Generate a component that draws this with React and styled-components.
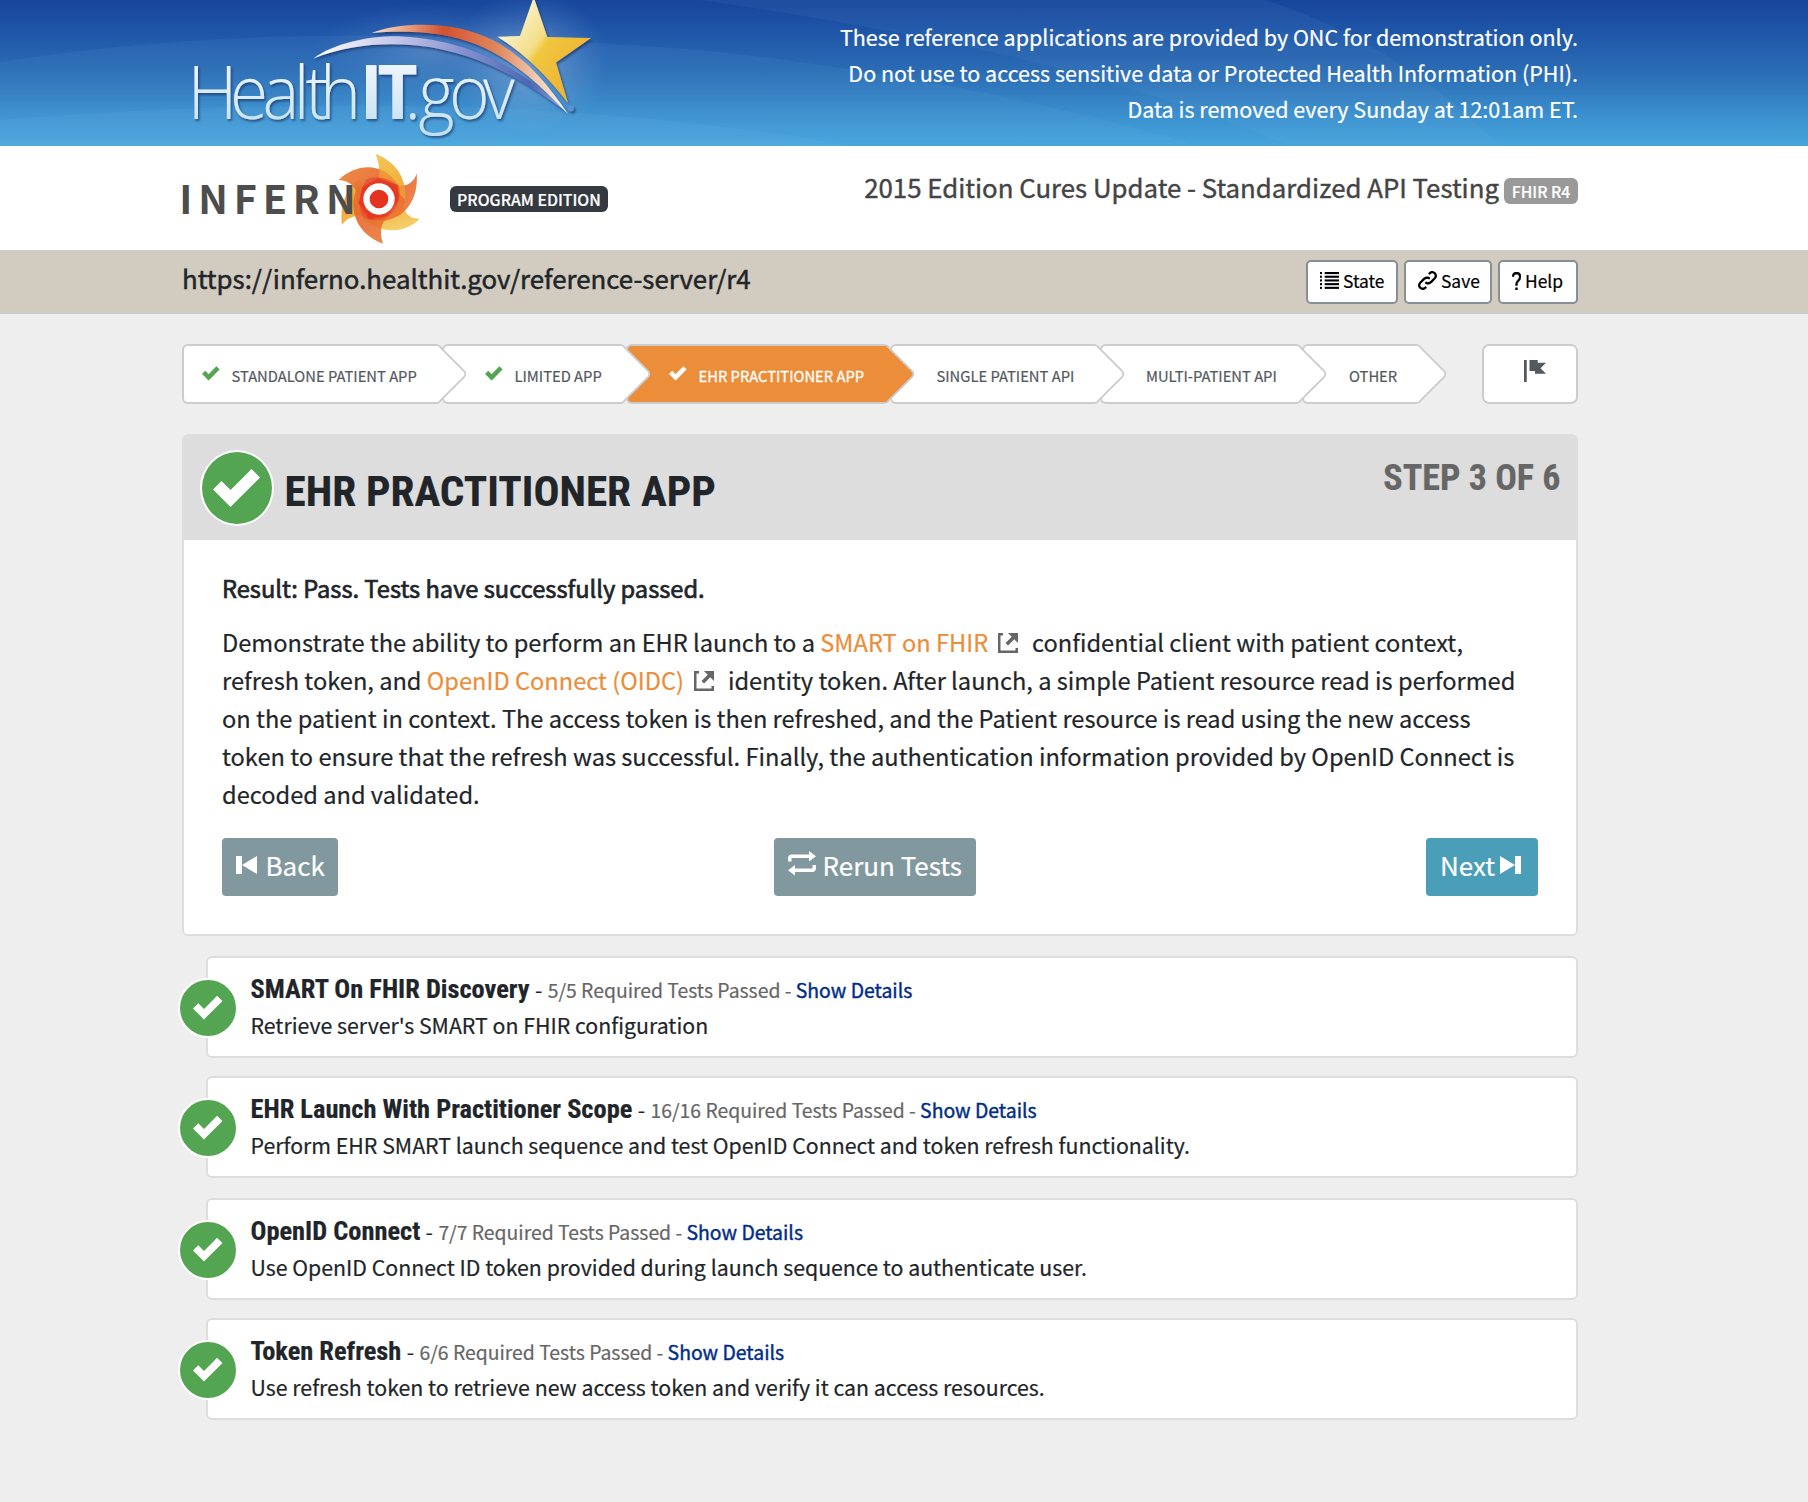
import React from "react";
import styled, { createGlobalStyle, css } from "styled-components";

const sans = `"Noto Sans CJK JP", "Noto Sans", sans-serif`;
const condensed = `"Roboto Condensed", Roboto, sans-serif`;

const GlobalStyle = createGlobalStyle`
  *, *::before, *::after { box-sizing: border-box; }
  body {
    margin: 0;
    min-height: 100vh;
    background: #eee;
    color: #212529;
    font-family: ${sans};
    -webkit-text-stroke: 0.2px;
  }
`;

/* ---------- icons ---------- */

const IconSvg = styled.svg`
  display: block;
  flex: none;
  fill: currentColor;
  width: ${(p) => p.$w}px;
  height: ${(p) => p.$h || p.$w}px;
`;

const paths = {
  check: "M6.41 1l-.69.72-2.78 2.78-.81-.78-.72-.72-1.41 1.41.72.72 1.5 1.5.69.72.72-.72 3.5-3.5.72-.72-1.44-1.41z",
  link: "M5.88.03c-.18.01-.36.03-.53.09-.27.1-.53.25-.75.47a.5.5 0 1 0 .69.69c.11-.11.24-.17.38-.22.35-.12.78-.07 1.06.22.39.39.39 1.04 0 1.44l-1.5 1.5c-.44.44-.8.48-1.06.47-.26-.01-.41-.13-.41-.13a.5.5 0 1 0-.5.88s.34.22.84.25c.5.03 1.2-.16 1.81-.78l1.5-1.5c.78-.78.78-2.04 0-2.81-.28-.28-.61-.45-.97-.53-.18-.04-.38-.04-.56-.03zm-2 2.31c-.5-.02-1.19.15-1.78.75l-1.5 1.5c-.78.78-.78 2.04 0 2.81.56.56 1.36.72 2.06.47.27-.1.53-.25.75-.47a.5.5 0 1 0-.69-.69c-.11.11-.24.17-.38.22-.35.12-.78.07-1.06-.22-.39-.39-.39-1.04 0-1.44l1.5-1.5c.4-.4.75-.45 1.03-.44.28.01.47.09.47.09a.5.5 0 1 0 .44-.88s-.34-.2-.84-.22z",
  flag: "M0 0v8h1v-8h-1zm2 0v4h2v1h4l-2-1.97 2-2.03h-3v-1h-3z",
  external: "M0 0v8h8v-2h-1v1h-6v-6h1v-1h-2zm4 0l1.5 1.5-2.5 2.5 1 1 2.5-2.5 1.5 1.5v-4h-4z",
  back: "M0 1v6h2v-6h-2zm2 3l5 3v-6l-5 3z",
  forward: "M0 1v6l5-3-5-3zm5 3v3h2v-6h-2v3z",
  loop: "M6 0v1h-5c-.55 0-1 .45-1 1v1h1v-1h5v1l2-1.5-2-1.5zm-4 4l-2 1.5 2 1.5v-1h5c.55 0 1-.45 1-1v-1h-1v1h-5v-1z",
};

function Icon({ name, size, className }) {
  return (
    <IconSvg className={className} $w={size} viewBox="0 0 8 8" aria-hidden="true">
      <path d={paths[name]} />
    </IconSvg>
  );
}

function ListIcon() {
  return (
    <IconSvg $w={19} $h={17} viewBox="0 0 19 17" aria-hidden="true">
      {[0, 3.7, 7.4, 11.1, 14.8].map((y) => (
        <React.Fragment key={y}>
          <rect x="0" y={y} width="2" height="2.1" />
          <rect x="4.7" y={y} width="14.3" height="2.1" />
        </React.Fragment>
      ))}
    </IconSvg>
  );
}

function QuestionIcon() {
  return (
    <IconSvg $w={9} $h={18} viewBox="0 0 4.97 8" preserveAspectRatio="none" aria-hidden="true">
      <path d="M2.47 0c-.85 0-1.48.26-1.88.66-.4.4-.54.9-.59 1.28l1 .13c.04-.25.12-.5.31-.69.19-.19.49-.38 1.16-.38.66 0 1.02.16 1.22.34.2.18.28.4.28.66 0 .83-.34 1.06-.84 1.5-.5.44-1.16 1.08-1.16 2.25v.25h1v-.25c0-.83.31-1.06.81-1.5.5-.44 1.19-1.08 1.19-2.25 0-.48-.17-1.02-.59-1.41-.43-.39-1.07-.59-1.91-.59zm-.5 7v1h1v-1h-1z" stroke="currentColor" strokeWidth=".25" />
    </IconSvg>
  );
}

/* ---------- banner ---------- */

const Band = styled.div`
  display: flex;
  justify-content: space-between;
  align-items: flex-start;
  padding: 0 230px 0 182px;
`;

const Banner = styled(Band)`
  position: relative;
  height: 146px;
  background: linear-gradient(#16459c 0%, #1f56a8 22%, #2c6fb6 52%, #3b91cf 80%, #46a4dc 100%);
`;

const BannerWaves = styled.svg`
  position: absolute;
  inset: 0;
  width: 100%;
  height: 100%;
`;

const BannerLogo = styled.svg`
  position: relative;
  width: 440px;
  height: 146px;
`;

const Wordmark = styled.text`
  font: 300 74.6px "Open Sans", "Noto Sans", sans-serif;
  -webkit-text-stroke: 0;
`;

const WordmarkBold = styled.tspan`
  font-weight: 700;
`;

const Disclaimer = styled.p`
  position: relative;
  margin: 0;
  padding-top: 19px;
  color: #fff;
  font-size: 21.5px;
  line-height: 36px;
  text-align: right;
  white-space: nowrap;
`;

function HealthItLogo() {
  return (
    <BannerLogo viewBox="182 0 440 146" aria-label="HealthIT.gov">
      <defs>
        <linearGradient id="letters" x1="0" y1="64" x2="0" y2="134" gradientUnits="userSpaceOnUse">
          <stop offset="0" stopColor="#eef5fc" />
          <stop offset="1" stopColor="#c2e0f2" />
        </linearGradient>
        <linearGradient id="star" x1="500" y1="25" x2="570" y2="75" gradientUnits="userSpaceOnUse">
          <stop offset="0" stopColor="#fbf7dc" />
          <stop offset=".47" stopColor="#f4dd86" />
          <stop offset=".56" stopColor="#f0c63f" />
          <stop offset="1" stopColor="#eeb634" />
        </linearGradient>
        <linearGradient id="red" x1="371" y1="0" x2="568" y2="0" gradientUnits="userSpaceOnUse">
          <stop offset="0" stopColor="#f6e4d8" />
          <stop offset=".2" stopColor="#e59a78" />
          <stop offset=".37" stopColor="#d4512f" />
          <stop offset=".65" stopColor="#e08a5e" />
          <stop offset=".85" stopColor="#f2cdb6" />
          <stop offset="1" stopColor="#fdf5ee" />
        </linearGradient>
        <linearGradient id="violet" x1="313" y1="0" x2="568" y2="0" gradientUnits="userSpaceOnUse">
          <stop offset="0" stopColor="#fff" />
          <stop offset=".35" stopColor="#bfc2e6" />
          <stop offset=".6" stopColor="#8390cf" />
          <stop offset=".85" stopColor="#4a66b8" />
          <stop offset="1" stopColor="#8fb0de" />
        </linearGradient>
        <radialGradient id="glow">
          <stop offset="0" stopColor="#dbe8f8" stopOpacity=".4" />
          <stop offset="1" stopColor="#8fb8e8" stopOpacity="0" />
        </radialGradient>
        <filter id="drop" x="-10%" y="-10%" width="120%" height="130%">
          <feDropShadow dx="1.4" dy="2" stdDeviation="1.2" floodColor="#0b2c5c" floodOpacity=".65" />
        </filter>
      </defs>
      <ellipse cx="530" cy="62" rx="78" ry="72" fill="url(#glow)" />
      <ellipse cx="430" cy="50" rx="120" ry="46" fill="url(#glow)" opacity=".5" />
      <g filter="url(#drop)">
        <Wordmark transform="scale(.93 1)" y="119.3" fill="url(#letters)">
          <tspan x="201.600 247.400 282.300 315.800 328.600 344">Health</tspan>
          <WordmarkBold x="386.700 405.900">IT</WordmarkBold>
          <tspan x="435 449.900 482.900 519.400">.gov</tspan>
        </Wordmark>
      </g>
      <g filter="url(#drop)">
        <path d="M313.5 58.5C335 42 375 35 402 36.500C470 40 525 70 567 112C525 82 480 52 417 45.500C380 42 345 46 313.500 58.500Z" fill="url(#violet)" />
        <path d="M371.500 33C395 24 425 23 452 27C507 36 540 72 568 114C540 86 505 48 450 36.500C425 31 395 31 371.500 33Z" fill="url(#red)" />
        <path d="M533.700 -3L547.300 37L591 38L556 62.500L568 103C549 79 527 55 497.300 36.700L520 36Z" fill="url(#star)" />
        <circle cx="571" cy="108.500" r="3" fill="#5f8fd0" />
      </g>
    </BannerLogo>
  );
}

/* ---------- brand row ---------- */

const BrandRow = styled(Band)`
  height: 104px;
  background: #fff;
`;

const Brand = styled.div`
  display: flex;
  align-items: flex-start;
  gap: 18px;
`;

const InfernoLogo = styled.svg`
  width: 258px;
  height: 100px;
  margin: 4px 0 0 -8px;
`;

const Badge = styled.span`
  display: block;
  width: ${(p) => p.$w}px;
  height: 26px;
  margin-top: ${(p) => p.$top}px;
  border-radius: 6px;
  background: ${(p) => p.$bg};
  color: #fff;
  font-size: ${(p) => p.$size}px;
  font-weight: 500;
  line-height: 27px;
  text-align: center;
  white-space: nowrap;
`;

const Module = styled.div`
  display: flex;
  align-items: flex-start;
  gap: 5px;
  padding-top: 21px;
`;

const ModuleName = styled.span`
  color: #444;
  font-size: 25.8px;
  line-height: 40px;
  white-space: nowrap;
  -webkit-text-stroke: 0.4px;
`;

function Inferno() {
  return (
    <InfernoLogo viewBox="174 150 258 100" aria-label="Inferno">
      <defs>
        <linearGradient id="orangeBlade" x1="488" y1="50" x2="700" y2="260" gradientUnits="userSpaceOnUse">
          <stop offset="0" stopColor="#ec8237" />
          <stop offset=".5" stopColor="#e8632b" />
          <stop offset="1" stopColor="#ec7c35" />
        </linearGradient>
        <linearGradient id="yellowBlade" x1="600" y1="12" x2="660" y2="240" gradientUnits="userSpaceOnUse">
          <stop offset="0" stopColor="#f5d878" />
          <stop offset=".5" stopColor="#efa030" />
          <stop offset="1" stopColor="#f5d06a" />
        </linearGradient>
      </defs>
      <g transform="translate(176 150) scale(.33333)">
        <path d="M599 12C655 34 692 78 688 150L600 120C614 80 614 50 599 12Z" fill="url(#yellowBlade)" />
        <path d="M731 206C690 250 615 255 560 205L610 150L690 140C676 180 692 206 731 206Z" fill="url(#yellowBlade)" />
        <path d="M498 225C492 180 504 120 548 88L600 150L560 196C532 196 512 206 498 225Z" fill="url(#yellowBlade)" />
        <path d="M488 90C540 40 625 32 672 112L640 180L545 160C548 122 530 92 488 90Z" fill="url(#orangeBlade)" opacity=".92" />
        <path d="M722 70C728 140 695 208 612 214L600 130L640 100C680 116 712 106 722 70Z" fill="url(#orangeBlade)" opacity=".88" />
        <path d="M621 281C555 258 508 190 545 108L600 120L650 190C620 206 606 236 621 281Z" fill="url(#orangeBlade)" opacity=".88" />
        <path d="M599 12C655 34 692 78 688 150L640 100L606 92C614 70 610 40 599 12Z" fill="#f3b840" opacity=".55" />
        <path d="M572 88C600 74 640 84 668 108C676 135 670 165 640 196C615 214 585 214 560 200C546 170 548 120 572 88Z" fill="#e5372a" opacity=".5" />
        <path d="M560 110L608 84L665 105L668 150L632 198L580 208L548 160Z" fill="#e4321f" opacity=".75" />
        <circle cx="609" cy="147" r="37.500" fill="#e6331f" stroke="#fff" strokeWidth="19" />
      </g>
      <text
        x="179.300 198.300 233.700 262.700 292.700 326"
        y="213.700"
        fill="#4d4d4d"
        fontFamily={sans}
        fontWeight="700"
        fontSize="39.600"
      >
        INFERN
      </text>
    </InfernoLogo>
  );
}

/* ---------- server bar ---------- */

const ServerBar = styled(Band)`
  height: 64px;
  border-top: 2px solid #ccc;
  border-bottom: 2px solid #ccc;
  background: #d2cbbf;
`;

const ServerUrl = styled.span`
  padding-top: 6px;
  font-size: 25.82px;
  line-height: 40px;
  -webkit-text-stroke: 0.5px;
`;

const Tools = styled.div`
  display: flex;
  gap: 6px;
  padding-top: 8px;
`;

const ToolButton = styled.button`
  display: flex;
  align-items: center;
  gap: 4px;
  width: ${(p) => p.$w}px;
  height: 44px;
  padding: 0 0 3px 12px;
  border: 2px solid #868e96;
  border-radius: 5px;
  background: #fff;
  color: #000;
  font: 400 17.4px/30px ${sans};
`;

/* ---------- steps ---------- */

const Page = styled.main`
  padding: 30px 230px 80px 182px;
`;

const StepRow = styled.nav`
  display: flex;
  justify-content: space-between;
`;

const Steps = styled.div`
  display: flex;
`;

const Step = styled.a`
  position: relative;
  z-index: ${(p) => p.$z};
  display: flex;
  align-items: center;
  width: ${(p) => p.$w}px;
  height: 60px;
  padding-left: ${(p) => p.$pad}px;
  border: 2px solid #ccc;
  border-right: 0;
  border-radius: 6px;
  background: ${(p) => (p.$active ? "#ec8d39" : "#fff")};
  color: ${(p) => (p.$active ? "#fff" : "#54585f")};
  font-size: 14.75px;
  line-height: 24px;
  white-space: nowrap;
  ${(p) => p.$active && css`-webkit-text-stroke: 0.3px;`}

  &::after {
    content: "";
    position: absolute;
    top: 7px;
    right: -18px;
    width: 42px;
    height: 42px;
    border-top: 2px solid #ccc;
    border-right: 2px solid #ccc;
    border-radius: 0 6px 0 0;
    background: inherit;
    transform: rotate(45deg);
    z-index: -1;
    clip-path: polygon(0 0, 100% 0, 100% 100%);
  }
`;

const StepLabel = styled.span`
  padding-top: 4px;
`;

const StepCheck = styled(Icon)`
  margin: -3px 11.5px 0 0;
  color: ${(p) => (p.$active ? "#fff" : "#54a551")};
`;

const FlagButton = styled.a`
  display: flex;
  justify-content: center;
  width: 96px;
  height: 60px;
  padding: 14px 0 0 10px;
  border: 2px solid #ccc;
  border-radius: 7px;
  background: #fff;
  color: #54585f;
`;

/* ---------- main card ---------- */

const Card = styled.section`
  margin-top: 30px;
  border: 2px solid #ddd;
  border-radius: 6px;
  background: #fff;
`;

const CardHeader = styled.header`
  display: flex;
  align-items: flex-start;
  height: 104px;
  padding: 14px 15.5px 0 16px;
  background: #ddd;
`;

const Circle = styled.span`
  display: flex;
  flex: none;
  align-items: center;
  justify-content: center;
  width: ${(p) => p.$w}px;
  height: ${(p) => p.$h}px;
  margin: ${(p) => p.$m || 0};
  padding-bottom: 2px;
  border: 2px solid #fff;
  border-radius: 50%;
  background: #54a551;
  color: #fff;
`;

const CardTitle = styled.h1`
  flex: 1;
  margin: 12px 0 0 10.5px;
  font: 700 43.2px/60px ${condensed};
  font-stretch: 75%;
`;

const StepCount = styled.span`
  margin-top: 6px;
  color: #666;
  font: 700 36px/44px ${condensed};
  font-stretch: 75%;
`;

const CardBody = styled.div`
  padding: 29px 38px 38px;
`;

const Result = styled.p`
  margin: 0 0 16px;
  font-size: 23.67px;
  line-height: 38px;
  -webkit-text-stroke: 0.7px;
`;

const Description = styled.p`
  margin: 0;
  font-size: 23.64px;
  line-height: 38px;
  white-space: nowrap;
`;

const DocLink = styled.a`
  color: #ec8d39;
`;

const ExternalIcon = styled(Icon)`
  display: inline-block;
  margin: 0 9px 0 9.6px;
  color: #666;
  vertical-align: -1px;
`;

const Actions = styled.div`
  display: flex;
  margin-top: 25px;
`;

const ActionButton = styled.button`
  display: flex;
  align-items: center;
  gap: ${(p) => p.$gap}px;
  width: ${(p) => p.$w}px;
  height: 58px;
  margin-left: ${(p) => p.$ml || "0"};
  padding: 0 0 5px 14px;
  border: 0;
  border-radius: 4px;
  background: ${(p) => (p.$primary ? "#4a9eb7" : "#81999e")};
  color: #fff;
  font: 400 26px/40px ${sans};
  white-space: nowrap;
`;

/* ---------- sequences ---------- */

const SequenceList = styled.div`
  display: flex;
  flex-direction: column;
  padding: 20px 0 0 24px;
`;

const Sequence = styled.article`
  display: flex;
  align-items: flex-start;
  height: 102px;
  margin-bottom: ${(p) => p.$gap}px;
  border: 2px solid #ddd;
  border-radius: 6px;
  background: #fff;
`;

const SequenceText = styled.div`
  padding: 13px 0 0 12.5px;
  white-space: pre;
`;

const SequenceHead = styled.div`
  display: flex;
  align-items: baseline;
  height: 36px;
  font-size: 21.3px;
  line-height: 36px;
`;

const SequenceName = styled.h2`
  margin: 0;
  font: 700 26.4px/36px ${condensed};
  font-stretch: 75%;
`;

const Dash = styled.span`
  padding: 0 0.6px;
`;

const SequenceCount = styled.span`
  color: #666;
  font-size: 19.36px;
`;

const DetailsLink = styled.a`
  color: #002d85;
  font-size: 19.4px;
  -webkit-text-stroke: 0.4px;
`;

const SequenceInfo = styled.p`
  margin: 0;
  font-size: 21.3px;
  line-height: 36px;
`;

const steps = [
  { label: "STANDALONE PATIENT APP", w: 260, pad: 18, done: true },
  { label: "LIMITED APP", w: 184, pad: 41, done: true },
  { label: "EHR PRACTITIONER APP", w: 264, pad: 41, done: true, active: true },
  { label: "SINGLE PATIENT API", w: 210, pad: 44.5 },
  { label: "MULTI-PATIENT API", w: 202, pad: 44 },
  { label: "OTHER", w: 120, pad: 45 },
];

const sequences = [
  { name: "SMART On FHIR Discovery", count: "5/5", info: "Retrieve server's SMART on FHIR configuration", gap: 18 },
  { name: "EHR Launch With Practitioner Scope", count: "16/16", info: "Perform EHR SMART launch sequence and test OpenID Connect and token refresh functionality.", gap: 20 },
  { name: "OpenID Connect", count: "7/7", info: "Use OpenID Connect ID token provided during launch sequence to authenticate user.", gap: 18 },
  { name: "Token Refresh", count: "6/6", info: "Use refresh token to retrieve new access token and verify it can access resources.", gap: 0 },
];

export default function App() {
  return (
    <>
      <GlobalStyle />
      <Banner as="header">
        <BannerWaves viewBox="0 0 1808 146" preserveAspectRatio="none" aria-hidden="true">
          <path d="M0 62C200 30 420 28 700 50C900 70 1080 110 1200 146H0Z" fill="#7ec4f0" opacity=".08" />
          <path d="M820 2C960 38 1120 76 1290 146H0V120C300 96 600 100 850 146L1290 146C1120 76 960 38 820 2Z" fill="#7ec4f0" opacity=".1" />
          <path d="M700 0H1265C1340 24 1420 66 1500 146H1290C1120 76 960 38 700 0Z" fill="#8fb8e8" opacity=".07" />
        </BannerWaves>
        <HealthItLogo />
        <Disclaimer>
          These reference applications are provided by ONC for demonstration only.
          <br />
          Do not use to access sensitive data or Protected Health Information (PHI).
          <br />
          Data is removed every Sunday at 12:01am ET.
        </Disclaimer>
      </Banner>

      <BrandRow>
        <Brand>
          <Inferno />
          <Badge $bg="#343a40" $w={158} $size={15.8} $top={40}>PROGRAM EDITION</Badge>
        </Brand>
        <Module>
          <ModuleName>2015 Edition Cures Update - Standardized API Testing</ModuleName>
          <Badge $bg="#999" $w={74} $size={15.7} $top={11}>FHIR R4</Badge>
        </Module>
      </BrandRow>

      <ServerBar>
        <ServerUrl>https://inferno.healthit.gov/reference-server/r4</ServerUrl>
        <Tools>
          <ToolButton $w={92}><ListIcon />State</ToolButton>
          <ToolButton $w={88}><Icon name="link" size={19} />Save</ToolButton>
          <ToolButton $w={80}><QuestionIcon />Help</ToolButton>
        </Tools>
      </ServerBar>

      <Page>
        <StepRow>
          <Steps>
            {steps.map((s, i) => (
              <Step key={s.label} $w={s.w} $pad={s.pad} $active={s.active} $z={steps.length - i}>
                {s.done && <StepCheck name="check" size={18} $active={s.active} />}
                <StepLabel>{s.label}</StepLabel>
              </Step>
            ))}
          </Steps>
          <FlagButton><Icon name="flag" size={22} /></FlagButton>
        </StepRow>

        <Card>
          <CardHeader>
            <Circle $w={74} $h={76}><Icon name="check" size={48} /></Circle>
            <CardTitle>EHR PRACTITIONER APP</CardTitle>
            <StepCount>STEP 3 OF 6</StepCount>
          </CardHeader>
          <CardBody>
            <Result>Result: Pass. Tests have successfully passed.</Result>
            <Description>
              Demonstrate the ability to perform an EHR launch to a <DocLink>SMART on FHIR</DocLink>
              <ExternalIcon name="external" size={20} /> confidential client with patient context,
              <br />
              refresh token, and <DocLink>OpenID Connect (OIDC)</DocLink>
              <ExternalIcon name="external" size={20} /> identity token. After launch, a simple Patient resource read is performed
              <br />
              on the patient in context. The access token is then refreshed, and the Patient resource is read using the new access
              <br />
              token to ensure that the refresh was successful. Finally, the authentication information provided by OpenID Connect is
              <br />
              decoded and validated.
            </Description>
            <Actions>
              <ActionButton $w={116} $gap={5.5}><Icon name="back" size={24} />Back</ActionButton>
              <ActionButton $w={202} $gap={6.5} $ml="436px"><Icon name="loop" size={28} />Rerun Tests</ActionButton>
              <ActionButton $w={112} $gap={5} $ml="auto" $primary>Next<Icon name="forward" size={24} /></ActionButton>
            </Actions>
          </CardBody>
        </Card>

        <SequenceList>
          {sequences.map((s) => (
            <Sequence key={s.name} $gap={s.gap}>
              <Circle $w={60} $h={60} $m="20px 0 0 -30px"><Icon name="check" size={30} /></Circle>
              <SequenceText>
                <SequenceHead>
                  <SequenceName>{s.name}</SequenceName>
                  <Dash> - </Dash>
                  <SequenceCount>{s.count} Required Tests Passed - </SequenceCount>
                  <DetailsLink>Show Details</DetailsLink>
                </SequenceHead>
                <SequenceInfo>{s.info}</SequenceInfo>
              </SequenceText>
            </Sequence>
          ))}
        </SequenceList>
      </Page>
    </>
  );
}
